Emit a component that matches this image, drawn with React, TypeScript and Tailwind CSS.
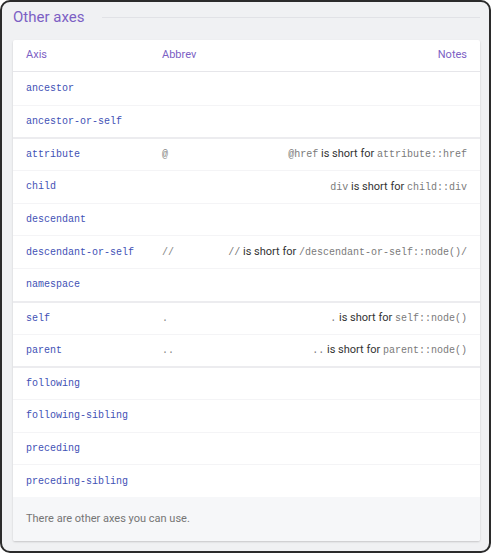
import React from "react";

type Row = {
  axis: string;
  abbrev?: string;
  note?: { short: string; long: string };
  groupStart?: boolean;
};

const rows: Row[] = [
  { axis: "ancestor" },
  { axis: "ancestor-or-self" },
  {
    axis: "attribute",
    abbrev: "@",
    note: { short: "@href", long: "attribute::href" },
    groupStart: true,
  },
  { axis: "child", note: { short: "div", long: "child::div" } },
  { axis: "descendant" },
  {
    axis: "descendant-or-self",
    abbrev: "//",
    note: { short: "//", long: "/descendant-or-self::node()/" },
  },
  { axis: "namespace" },
  {
    axis: "self",
    abbrev: ".",
    note: { short: ".", long: "self::node()" },
    groupStart: true,
  },
  { axis: "parent", abbrev: "..", note: { short: "..", long: "parent::node()" } },
  { axis: "following", groupStart: true },
  { axis: "following-sibling" },
  { axis: "preceding" },
  { axis: "preceding-sibling" },
];

const mono = "font-['Liberation_Mono','DejaVu_Sans_Mono',monospace] text-[10px]";

export default function App() {
  return (
    <div className="h-[553px] w-[491px] overflow-hidden rounded-[10px] border-2 border-[#2b2b2b] bg-[#f0f1f3] font-['Roboto',sans-serif]">
      {/* Section title */}
      <div className="flex items-center gap-[18px] pl-[11px] pr-[9px] pt-[4px]">
        <h2 className="text-[15px] leading-[22px] text-[#7c5fc4]">Other axes</h2>
        <div className="h-px flex-1 bg-[#e1e2e6]" />
      </div>

      {/* Card */}
      <div className="ml-[11px] mr-[9px] mt-[12px] overflow-hidden rounded-[2px] bg-white shadow-[0_1px_2px_rgba(0,0,0,0.18)]">
        <div className="grid h-[32px] grid-cols-[136px_65px_1fr] items-center border-b border-[#e6e6ea] text-[11px] text-[#7c5fc4]">
          <div className="pl-[13px]">Axis</div>
          <div className="pl-[13px]">Abbrev</div>
          <div className="pr-[13px] text-right">Notes</div>
        </div>

        {rows.map((r, i) => (
          <div
            key={r.axis}
            className={
              "grid h-[32.7px] grid-cols-[136px_65px_1fr] items-center " +
              (i === 0
                ? ""
                : r.groupStart
                  ? "border-t-2 border-[#ececef]"
                  : "border-t border-[#f4f4f6]")
            }
          >
            <div className={`pl-[13px] text-[#3f51b5] ${mono}`}>{r.axis}</div>
            <div className={`pl-[13px] text-[#858585] ${mono}`}>{r.abbrev}</div>
            <div className="whitespace-nowrap pr-[13px] text-right text-[11px] text-[#333]">
              {r.note && (
                <>
                  <span className={`text-[#7a7a7a] ${mono}`}>{r.note.short}</span>{" "}
                  is short for{" "}
                  <span className={`text-[#7a7a7a] ${mono}`}>{r.note.long}</span>
                </>
              )}
            </div>
          </div>
        ))}

        <div className="flex h-[44px] items-center bg-[#f6f7f9] pl-[13px] text-[11px] text-[#757575]">
          There are other axes you can use.
        </div>
      </div>
    </div>
  );
}
